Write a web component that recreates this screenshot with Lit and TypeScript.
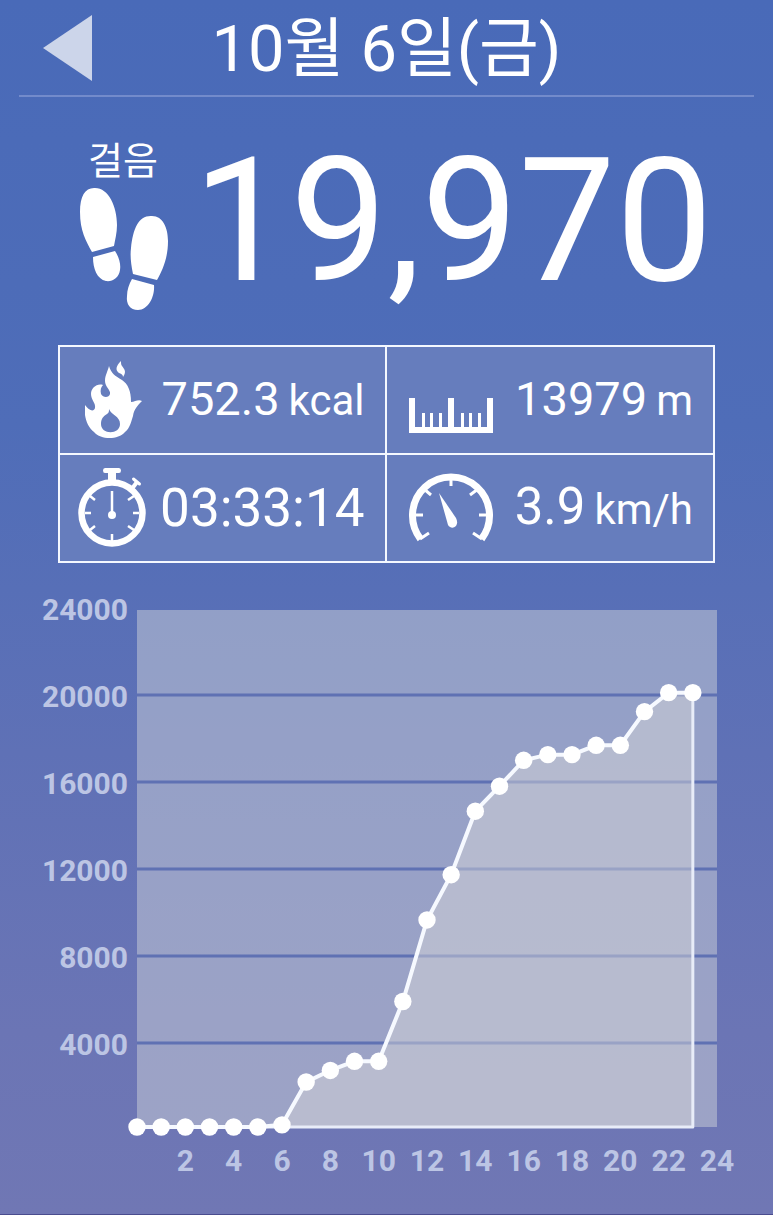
import { LitElement, html, svg, css } from "lit";
import { customElement } from "lit/decorators.js";

const STEPS: number[] = [
  0, 0, 0, 0, 0, 0, 100, 2070, 2600, 3020, 3020, 5770, 9520, 11600, 14520, 15670,
  16860, 17120, 17120, 17550, 17550, 19100, 19970, 19970,
];

const PLOT = { left: 137, right: 717, top: 20, bottom: 537 };
const HOUR = (PLOT.right - PLOT.left) / 24;
const STEP_PX = 87 / 4000;

@customElement("step-chart")
export class StepChart extends LitElement {
  static styles = css`
    :host {
      display: block;
    }
    .chart {
      display: block;
      width: 100%;
      height: auto;
    }
    .band {
      fill: #ccd0d8;
      fill-opacity: 0.5;
    }
    .area {
      fill: #d4d4d8;
      fill-opacity: 0.5;
    }
    .grid {
      stroke: #5f71b3;
      stroke-width: 3;
    }
    .edge {
      fill: none;
      stroke: #e8ecf8;
      stroke-width: 3;
      stroke-linejoin: round;
    }
    .line {
      fill: none;
      stroke: #f6f9ff;
      stroke-width: 4;
    }
    .dot {
      fill: #fff;
    }
    .label {
      fill: #bcc5e4;
      font: 700 30px Roboto, "Noto Sans", sans-serif;
    }
    .y {
      text-anchor: end;
    }
    .x {
      text-anchor: middle;
    }
  `;

  render() {
    const pts = STEPS.map((v, h) => [PLOT.left + h * HOUR, PLOT.bottom - v * STEP_PX]);
    const path = pts.map((p) => p.join(",")).join(" ");
    const endX = PLOT.left + 23 * HOUR;
    const levels = [24000, 20000, 16000, 12000, 8000, 4000];
    const hours = Array.from({ length: 12 }, (_, i) => (i + 1) * 2);
    return html`
      <svg class="chart" viewBox="0 0 773 600" role="img" aria-label="걸음">
        <rect class="band" x=${PLOT.left} y=${PLOT.top} width=${PLOT.right - PLOT.left}
          height=${PLOT.bottom - PLOT.top}></rect>
        ${levels.map(
          (v, i) => svg`
            ${i ? svg`<line class="grid" x1=${PLOT.left} x2=${PLOT.right} y1=${18 + i * 87} y2=${18 + i * 87}></line>` : ""}
            <text class="label y" x="128" y=${30 + i * 87}>${v}</text>`,
        )}
        <polygon class="area" points="${PLOT.left},${PLOT.bottom} ${path} ${endX},${PLOT.bottom}"></polygon>
        <polyline class="edge" points="${PLOT.left},${PLOT.bottom} ${endX},${PLOT.bottom} ${endX},${pts[23][1]}"></polyline>
        <polyline class="line" points=${path}></polyline>
        ${pts.map((p) => svg`<circle class="dot" cx=${p[0]} cy=${p[1]} r="8.7"></circle>`)}
        ${hours.map((h) => svg`<text class="label x" x=${PLOT.left + h * HOUR} y="581">${h}</text>`)}
      </svg>
    `;
  }
}

const flame = html`<svg class="icon" viewBox="-7 0 68 80" aria-hidden="true">
  <path fill="#fff" fill-rule="evenodd" d="M24 6C23 11 20 15 20 21C20 27 26 30 25 34C24 38 18 38 16 34C15 30 16 27 18 25C12 23 6 28 6 34C6 40 11 43 10 48C9 52 4 51 0 45V55C1 62 4 68 9 72C16 80 33 80 40 72C45 68 46 62 48 56C49 49 53 45 57 41C53 39 50 42 46 42C46 31 43 24 37 20C30 16 26 13 24 6ZM24 49C26 55 35 56 35 64C35 75 16 75 16 64C16 58 19 56 22 54C24 53 24 51 24 49Z"/>
  <path fill="#fff" d="M36 1C31 6 30 10 34 13C37 14 38 15 38 17C42 11 39 9 37 6C36 5 36 3 36 1Z"/>
</svg>`;

const stopwatch = html`<svg class="icon" viewBox="0 0 68 80" aria-hidden="true">
  <circle cx="34" cy="45" r="30.5" fill="none" stroke="#fff" stroke-width="6.500"/>
  <path fill="#fff" d="M27 0H41Q43 0 43 2.500T41 5H38V14H30V5H27Q25 5 25 2.500T27 0Z"/>
  <path stroke="#fff" stroke-width="4" d="M53 22L59 14"/>
  <path stroke="#fff" stroke-width="3" stroke-linecap="round" d="M55.500 11L61.500 16"/>
  <path stroke="#fff" stroke-width="2.500" d="M34 23V47M34 66V73M7 45H13M55 45H61M12 28L17 32M56 28L50 32M12 62L17 58M56 62L50 58"/>
  <circle cx="34" cy="47" r="4" fill="#fff"/>
</svg>`;

const ruler = html`<svg class="icon" viewBox="0 0 86 80" aria-hidden="true">
  <path fill="#fff" d="M1 38H7V67H14V53H17V67H22V53H25V67H31V53H34V67H40V38H46V67H53V53H56V67H61V53H64V67H70V53H73V67H79V38H85V73H1Z"/>
</svg>`;

const gauge = html`<svg class="icon" viewBox="0 0 86 80" aria-hidden="true">
  <path fill="none" stroke="#fff" stroke-width="7" d="M12.500 71A38.500 38.500 0 1 1 73.500 71"/>
  <path stroke="#fff" stroke-width="3" d="M43 8V18M16 21L23 27M70 21L62 27M6 47H15M80 47H71M12 71L21 65M74 71L65 65"/>
  <path fill="#fff" d="M31 25L48 50C52 58 44 63 40 57Z"/>
</svg>`;

@customElement("app-root")
export class AppRoot extends LitElement {
  static styles = css`
    :host {
      display: block;
      box-sizing: border-box;
      min-height: 100vh;
      color: #fff;
      font-family: Roboto, "Noto Sans CJK KR", sans-serif;
      background: linear-gradient(#496ab8, #4f6db8 35%, #5f71b6 62%, #6b75b5 85%, #7077b4);
      border-bottom: 1px solid #4a4c8e;
    }
    .header {
      display: grid;
      grid-template-columns: 76px 1fr 76px;
      align-items: center;
      height: 95px;
      margin: 0 19px;
      border-bottom: 2px solid #738bcb;
    }
    .back {
      padding: 0;
      border: 0;
      background: none;
      justify-self: end;
      width: 52px;
      height: 66px;
      cursor: pointer;
    }
    .back svg,
    .feet {
      display: block;
    }
    .title {
      margin: 0;
      padding-top: 3px;
      text-align: center;
      font-size: 65px;
      line-height: 92px;
      font-weight: 400;
    }
    .hero {
      display: flex;
      justify-content: space-between;
      padding: 38px 60px 0 78px;
      height: 210px;
    }
    .caption {
      display: flex;
      flex-direction: column;
      align-items: center;
      font-size: 38px;
      line-height: 52px;
    }
    .total {
      font-size: 173px;
      line-height: 172px;
    }
    .stats {
      display: grid;
      grid-template-columns: 325fr 327fr;
      gap: 2px;
      margin: 0 58px;
      border: 2px solid #f4f8ff;
      background: #f4f8ff;
    }
    .cell {
      display: flex;
      align-items: center;
      justify-content: space-between;
      height: 106px;
      padding: 0 20px 0 18px;
      background: #667dbd;
    }
    .cell:nth-child(even) {
      padding-left: 21px;
    }
    .icon {
      display: block;
      height: 80px;
    }
    .value {
      display: flex;
      align-items: baseline;
      gap: 9px;
      padding-bottom: 3px;
      font-size: 47px;
      white-space: nowrap;
    }
    .unit {
      font-size: 42px;
    }
    .time {
      padding-bottom: 0;
      font-size: 53px;
    }
    .speed {
      font-size: 51px;
    }
    .chart {
      margin-top: 27px;
    }
  `;

  render() {
    return html`
      <header class="header">
        <button class="back" aria-label="이전">
          <svg width="52" height="66" viewBox="0 0 52 66"><path fill="#ccd5ea" d="M0 33L49 0V66Z"/></svg>
        </button>
        <h1 class="title">10월 6일(금)</h1>
      </header>
      <section class="hero">
        <div class="caption">
          <span>걸음</span>
          <svg class="feet" width="90" height="124" viewBox="0 0 90 124" aria-hidden="true">
            <path fill="#fff" d="M16 1C30 0 39 19 39 38C39 46 37 53 36 59L14 65C8 54 2 44 2 25C2 9 7 1 16 1Z"/>
            <path fill="#fff" d="M15 70L37 64C41 70 43 77 42 83C41 91 34 95 28 94C19 92 15 82 15 70Z"/>
            <path fill="#fff" d="M74 29C85 29 90 41 90 54C90 72 84 84 79 93L55 87C53 77 52 69 53 61C55 41 61 28 74 29Z"/>
            <path fill="#fff" d="M54 92L76 98C77 110 70 123 60 123C52 123 48 117 49 109C49 103 51 97 54 92Z"/>
          </svg>
        </div>
        <div class="total">19,970</div>
      </section>
      <section class="stats">
        <div class="cell">${flame}<div class="value"><span>752.3</span><span class="unit">kcal</span></div></div>
        <div class="cell">${ruler}<div class="value"><span>13979</span><span class="unit">m</span></div></div>
        <div class="cell">${stopwatch}<div class="value time">03:33:14</div></div>
        <div class="cell">${gauge}<div class="value speed"><span>3.9</span><span class="unit">km/h</span></div></div>
      </section>
      <step-chart class="chart"></step-chart>
    `;
  }
}
